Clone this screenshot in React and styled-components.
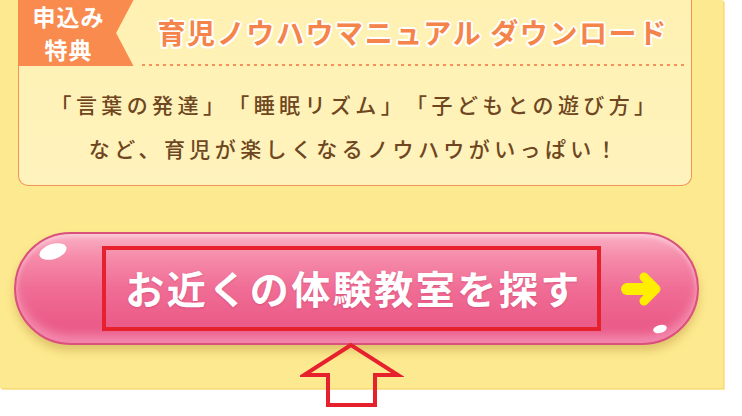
import React from 'react';
import styled, { createGlobalStyle } from 'styled-components';

const FONT = '"Noto Sans CJK JP", "Noto Sans", sans-serif';

const GlobalStyle = createGlobalStyle`
  html, body {
    margin: 0;
    padding: 0;
    background: #ffffff;
    font-family: ${FONT};
    text-spacing-trim: space-all;
  }
`;

const Page = styled.div`
  position: relative;
  width: 742px;
  height: 416px;
  overflow: hidden;
  background: #ffffff;
`;

const Panel = styled.section`
  width: 723px;
  height: 388px;
  background: #fde98f;
  box-shadow: 1px 1px 0 #f7dc78, 2px 2px 0 #fbe7a0;
  display: flex;
  flex-direction: column;
  box-sizing: border-box;
`;

const Card = styled.div`
  margin-left: 18px;
  width: 674px;
  height: 186px;
  box-sizing: border-box;
  background: linear-gradient(to bottom, #fff1b2, #fff3bd);
  border: 1.5px solid #f29455;
  border-top: none;
  border-radius: 0 0 10px 10px;
  display: flex;
  flex-direction: column;
`;

const Header = styled.div`
  display: flex;
  height: 66px;
  margin-left: -1.5px;
`;

const Badge = styled.div`
  width: 116px;
  height: 66px;
  flex-shrink: 0;
  background: #f88b4d;
  clip-path: polygon(0 0, 100% 0, 85% 50%, 100% 100%, 0 100%);
  color: #ffffff;
  display: flex;
  flex-direction: column;
  align-items: center;
  justify-content: center;
  padding-right: 14px;
  box-sizing: border-box;
`;

const BadgeLine = styled.span`
  display: block;
  font-size: 23px;
  font-weight: 700;
  line-height: 33px;
  letter-spacing: 1px;
`;

const TitleArea = styled.div`
  flex: 1;
  margin: 0 7px 0 8px;
  display: flex;
  align-items: center;
  padding-left: 16px;
  padding-bottom: 2px;
  background-image: repeating-linear-gradient(
    to right,
    #f2935a 0 3px,
    transparent 3px 7px
  );
  background-size: 100% 2px;
  background-position: bottom left;
  background-repeat: no-repeat;
`;

const Title = styled.h2`
  margin: 0;
  font-size: 28px;
  font-weight: 700;
  color: #f5844a;
  letter-spacing: 1.6px;
  white-space: nowrap;
  text-shadow: 2px 0 0 #fff, -2px 0 0 #fff, 0 2px 0 #fff, 0 -2px 0 #fff,
    1.5px 1.5px 0 #fff, -1.5px 1.5px 0 #fff, 1.5px -1.5px 0 #fff,
    -1.5px -1.5px 0 #fff;
`;

const Body = styled.div`
  padding-top: 16px;
  text-align: center;
  color: #6e4621;
  font-size: 21px;
  font-weight: 500;
  line-height: 44px;
  letter-spacing: 4.4px;
`;

const Line = styled.p`
  margin: 0;
  white-space: nowrap;
`;

const Button = styled.a`
  position: relative;
  margin-top: 46px;
  margin-left: 14px;
  width: 685px;
  height: 113px;
  box-sizing: border-box;
  border-radius: 57px;
  border: 2px solid #d9527c;
  background: linear-gradient(
    to bottom,
    #fab0c4 0%,
    #f58aa9 22%,
    #f06d95 50%,
    #eb5d89 80%,
    #e9598a 100%
  );
  box-shadow: 0 6px 9px rgba(170, 130, 40, 0.35),
    inset 0 -8px 10px rgba(255, 190, 215, 0.45),
    inset 0 3px 4px rgba(255, 255, 255, 0.35);
  display: flex;
  align-items: center;
  padding-left: 86px;
  gap: 20px;
  text-decoration: none;
  cursor: pointer;

  &::before {
    content: '';
    position: absolute;
    left: 23px;
    top: 10px;
    width: 28px;
    height: 15px;
    border-radius: 50%;
    background: #ffffff;
    transform: rotate(-18deg);
  }

  &::after {
    content: '';
    position: absolute;
    right: 30px;
    bottom: 10px;
    width: 14px;
    height: 8px;
    border-radius: 50%;
    background: #ffffff;
    transform: rotate(-15deg);
  }
`;

const LabelBox = styled.span`
  width: 499px;
  height: 85px;
  box-sizing: border-box;
  border: 4px solid #e6202c;
  display: flex;
  align-items: center;
  justify-content: center;
  color: #ffffff;
  font-size: 39px;
  font-weight: 700;
  letter-spacing: 2.5px;
  padding-left: 4px;
  padding-bottom: 4px;
  text-shadow: 0 1px 2px rgba(180, 40, 90, 0.35);
  white-space: nowrap;
`;

const Pointer = styled.svg`
  position: absolute;
  left: 300px;
  top: 341px;
`;

const YellowArrow = () => (
  <svg width="42" height="34" viewBox="0 0 42 34">
    <path d="M6 17 H28" stroke="#ffee00" strokeWidth="12" strokeLinecap="round" fill="none" />
    <path
      d="M23 5 L35 17 L23 29"
      stroke="#ffee00"
      strokeWidth="9"
      strokeLinecap="round"
      strokeLinejoin="round"
      fill="none"
    />
  </svg>
);

export default function App() {
  return (
    <Page>
      <GlobalStyle />
      <Panel>
        <Card>
          <Header>
            <Badge>
              <BadgeLine>申込み</BadgeLine>
              <BadgeLine>特典</BadgeLine>
            </Badge>
            <TitleArea>
              <Title>育児ノウハウマニュアル ダウンロード</Title>
            </TitleArea>
          </Header>
          <Body>
            <Line>「言葉の発達」「睡眠リズム」「子どもとの遊び方」</Line>
            <Line>など、育児が楽しくなるノウハウがいっぱい！</Line>
          </Body>
        </Card>
        <Button href="#">
          <LabelBox>お近くの体験教室を探す</LabelBox>
          <YellowArrow />
        </Button>
      </Panel>
      <Pointer width="104" height="70" viewBox="0 0 104 70">
        <path
          d="M51 4 L4 34 L28 34 L28 64 L75 64 L75 34 L98 34 Z"
          fill="none"
          stroke="#e6202c"
          strokeWidth="4"
          strokeLinejoin="miter"
        />
      </Pointer>
    </Page>
  );
}
